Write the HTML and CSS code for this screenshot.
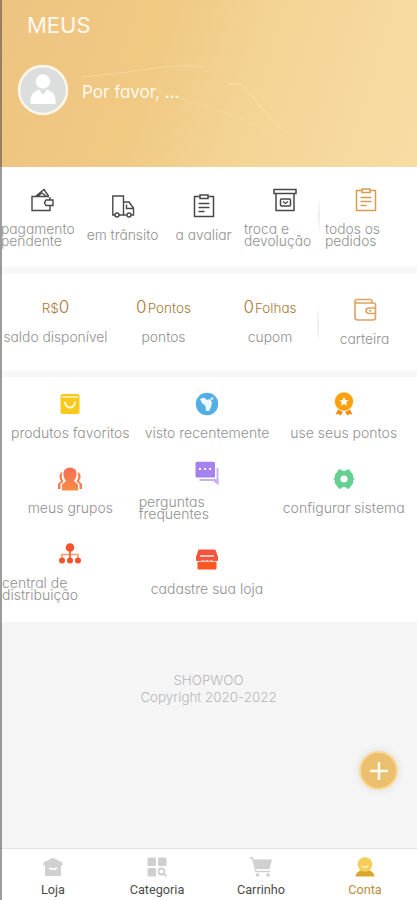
FILE: index.html
```html
<!DOCTYPE html>
<html lang="pt-BR">
<head>
<meta charset="utf-8">
<meta name="viewport" content="width=device-width, initial-scale=1">
<title>Meus</title>
<link rel="stylesheet" href="styles.css">
</head>
<body>
<div class="app">
  <header class="hero">
    <svg class="hero-lines" viewBox="0 0 417 167" fill="none" stroke="#ffe9bd"><path d="M82 77Q120 74 155 68Q180 64 205 67" opacity=".4"/><path d="M228 84H242L262 108L281 129" opacity=".6"/><path d="M150 88Q200 105 240 118L290 143" opacity=".2"/></svg>
    <h1 class="title">MEUS</h1>
    <div class="user">
      <div class="avatar">
        <svg viewBox="0 0 52 52" width="52" height="52"><circle cx="26" cy="26" r="24" fill="#dcdddd" stroke="#fff8ea" stroke-width="2.5"/><circle cx="26" cy="17.500" r="7.2" fill="#fff"/><path d="M13.500 40Q12 29 22 25.500L26 31L30 25.500Q40 29 38.500 40Z" fill="#fff"/></svg>
      </div>
      <span class="username">Por favor, ...</span>
    </div>
  </header>

  <section class="row orders">
    <div class="item"><svg class="icon" viewBox="0 0 24 24" fill="none" stroke="#484848" stroke-width="1.4"><path d="M19 8.500H2V22.500H20V18M20 12V9M6 8L14 1.500L18.500 8M8 8L12 5L16 8"/><path d="M23 12H16L14.500 14.800L16 17.500H23V12Z"/></svg><span class="label">pagamento pendente</span></div>
    <div class="item"><svg class="icon" viewBox="0 0 24 24" fill="none" stroke="#484848" stroke-width="1.4"><path d="M4 21H1.800V2H12.500V21H8M12.500 8H18L22.500 14V21H20M15.500 21H12.500M15.500 10.500V14.500H22"/><circle cx="6" cy="21" r="2"/><circle cx="18" cy="21" r="2"/></svg><span class="label">em trânsito</span></div>
    <div class="item"><svg class="icon" viewBox="0 0 24 24" fill="none" stroke="#484848" stroke-width="1.5"><path d="M8 2.500H2.500V22.500H21.500V2.500H16M6.500 9.500H17.500M6.500 13.500H17.500M6.500 17.500H12.500"/><path d="M8 1H16V4.500H8Z"/></svg><span class="label">a avaliar</span></div>
    <div class="item"><svg class="icon" viewBox="0 0 24 24" fill="none" stroke="#484848" stroke-width="1.5"><path d="M1 1.500H23V5.500H1ZM3 5.500V22.500H21V5.500"/><rect x="7.500" y="11" width="10" height="7" rx="1"/><path d="M10 13.500L12.500 15.500L15 13.500" stroke-width="1.200"/></svg><span class="label">troca e devolução</span></div>
    <div class="item divided"><svg class="icon" viewBox="0 0 24 24" fill="none" stroke="#dc9a4e" stroke-width="1.5"><path d="M8 2.500H2.500V22.500H21.500V2.500H16M6.500 9.500H17.500M6.500 13.500H17.500M6.500 17.500H12.500"/><path d="M8 1H16V4.500H8Z"/></svg><span class="label">todos os pedidos</span></div>
  </section>

  <section class="row wallet">
    <div class="item balance"><span class="value"><small>R$</small>0</span><span class="label">saldo disponível</span></div>
    <div class="item balance"><span class="value">0<small class="unit">Pontos</small></span><span class="label">pontos</span></div>
    <div class="item balance"><span class="value">0<small class="unit">Folhas</small></span><span class="label">cupom</span></div>
    <div class="item divided"><svg class="icon" viewBox="0 0 24 24" fill="none" stroke="#dfa263" stroke-width="1.600"><path d="M2 3V19.500Q2 22 4.500 22H20Q22.500 22 22.500 19.500V7Q22.500 5 20.500 5H4.500Q2 5 2 3.200Q2 1.500 4.500 1.500H17.500Q19 1.500 19 5M22.500 10H16.500Q13 10 13 12.500Q13 15.500 16.500 15.500H22.500M16 12.700H18.500"/></svg><span class="label">carteira</span></div>
  </section>

  <section class="menu">
    <div class="item"><svg class="icon" viewBox="0 0 24 24"><rect x="2.500" y="2" width="19" height="20" rx="2" fill="#f9c91e"/><path d="M4 5H20" stroke="#fff3b8" stroke-width="1.600"/><path d="M7 10.500Q8 15.500 12 15.500T17 10.500" fill="none" stroke="#fffbe0" stroke-width="1.800" stroke-linecap="round"/></svg><span class="label">produtos favoritos</span></div>
    <div class="item"><svg class="icon" viewBox="0 0 24 24"><circle cx="12" cy="12" r="11.200" fill="#54aee4"/><path d="M5 7L9 5.500L12 8L15 7L17 10L16 15L14 19L11 19L10.500 14L7 11Z" fill="#eef9ff"/><circle cx="17" cy="6.500" r="1.500" fill="#c6e8fb"/></svg><span class="label">visto recentemente</span></div>
    <div class="item"><svg class="icon" viewBox="0 0 24 24"><path d="M6 17.500L11 20L8.500 23.500L6.500 22L3.500 22.500ZM18 17.500L13 20L15.500 23.500L17.500 22L20.500 22.500Z" fill="#fb8b0b"/><circle cx="12" cy="9.500" r="9.200" fill="#fda00d"/><path d="M12 5L13.400 8L16.600 8.400L14.200 10.500L14.900 13.700L12 12.100L9.100 13.700L9.800 10.500L7.400 8.400L10.600 8Z" fill="#fff"/></svg><span class="label">use seus pontos</span></div>

    <div class="item"><svg class="icon" viewBox="0 0 24 24"><defs><linearGradient id="people" x2="0" y2="1"><stop stop-color="#f56f57"/><stop offset="1" stop-color="#fb8b45"/></linearGradient></defs><path d="M4.500 5Q1 6 1.500 11L3 14L0 17V22H2.500V17L5.500 14.500Q2.500 10 4.500 5ZM19.500 5Q23 6 22.500 11L21 14L24 17V22H21.500V17L18.500 14.500Q21.500 10 19.500 5Z" fill="#f87b55"/><path d="M12 .5C4 .5 4 9 8 14L4 17.500V23.500H20V17.500L16 14C20 9 20 .5 12 .5Z" fill="url(#people)"/></svg><span class="label">meus grupos</span></div>
    <div class="item"><svg class="icon" viewBox="0 0 24 24"><path d="M2 .8H18.500Q20 .8 20 2.300V16.500H2Q.5 16.500 .5 15V2.300Q.5 .8 2 .8Z" fill="#a583ef"/><path d="M22.500 7V19H4.500M19 19.500L22.800 22.500V18" stroke="#c6adf5" stroke-width="1.800" fill="none"/><path d="M4 8H6M9 8H11M14 8H16" stroke="#fff" stroke-width="2"/></svg><span class="label">perguntas frequentes</span></div>
    <div class="item"><svg class="icon" viewBox="0 0 24 24"><path d="M7.500 3Q9.800 5 12 5Q14.200 5 16.500 3L20.500 8.500Q19.300 10.500 21.500 12Q19.300 13.500 20.500 15.500L16.500 21Q14.200 19 12 19Q9.800 19 7.500 21L3.500 15.500Q4.700 13.500 2.500 12Q4.700 10.500 3.500 8.500Z" fill="#65d092" stroke="#65d092" stroke-width="1.800" stroke-linejoin="round"/><circle cx="12" cy="12" r="3.600" fill="#fff"/></svg><span class="label">configurar sistema</span></div>

    <div class="item"><svg class="icon" viewBox="0 0 24 24"><path d="M12 7V18M4 18V12.500H20V18" fill="none" stroke="#ff9b72" stroke-width="1.500"/><path d="M12 8V18" stroke="#f65b2c" stroke-width="1.500"/><g fill="#f6532a"><circle cx="12" cy="5.500" r="4.300"/><circle cx="4" cy="18.500" r="3"/><circle cx="12" cy="18.500" r="3"/><circle cx="20" cy="18.500" r="3"/></g></svg><span class="label">central de distribuição</span></div>
    <div class="item"><svg class="icon" viewBox="0 0 24 24"><path d="M4 2H20L22.500 9V12.500H1.500V9Z" fill="#f3533c" stroke="#f3533c" stroke-linejoin="round"/><path d="M5 8H19" stroke="#ffd4c8" stroke-width="1.800"/><path d="M2.500 14H21.500V20Q21.500 21.500 20 21.500H4Q2.500 21.500 2.500 20Z" fill="#fb5522"/><path d="M3 13Q6 14.500 7.500 12.500Q9.500 14.500 12 12.500Q14.500 14.500 16.500 12.500Q18 14.500 21 13" fill="none" stroke="#ffc2ad" stroke-width="1.300"/></svg><span class="label">cadastre sua loja</span></div>
  </section>

  <footer class="copy">SHOPWOO<br>Copyright 2020-2022</footer>

  <button class="fab" aria-label="Adicionar"><svg viewBox="0 0 20 20" width="20" height="20"><path d="M10 1V19M1 10H19" stroke="#fffaf0" stroke-width="2.600"/></svg></button>

  <nav class="tabs">
    <div class="tab"><svg class="tab-icon" viewBox="0 0 20 20"><path d="M10 .8L19.500 5.500V8.500H18V19H2V8.500H.5V5.500Z" fill="#d0d0d0"/><path d="M6 11Q10 13.500 14 11" stroke="#fff" stroke-width="1.600" fill="none"/></svg>Loja</div>
    <div class="tab"><svg class="tab-icon" viewBox="0 0 20 20"><g fill="#cfcfcf"><rect x=".5" y=".5" width="8.500" height="8.500" rx="1.500"/><rect x="11" y=".5" width="8.500" height="8.500" rx="1.500"/><rect x=".5" y="11" width="8.500" height="8.500" rx="1.500"/></g><circle cx="14.500" cy="14.500" r="3" fill="none" stroke="#cfcfcf" stroke-width="1.800"/><path d="M17 17L19.500 19.500" stroke="#cfcfcf" stroke-width="1.800"/></svg>Categoria</div>
    <div class="tab"><svg class="tab-icon cart" viewBox="0 0 24 20"><path d="M.5 1H3.500L7 14.500H21" fill="none" stroke="#cfcfcf" stroke-width="1.400"/><path d="M4.500 2.500H23L20.500 12H7Z" fill="#cfcfcf"/><circle cx="8.500" cy="18" r="1.800" fill="#cfcfcf"/><circle cx="19" cy="18" r="1.800" fill="#cfcfcf"/></svg>Carrinho</div>
    <div class="tab active"><svg class="tab-icon" viewBox="0 0 20 20"><path d="M.5 19.500Q1 14.500 7 13H13Q19 14.500 19.500 19.500Z" fill="#dba529"/><circle cx="10" cy="7.500" r="7.300" fill="#f6cd57"/><path d="M6.500 8.500Q10 12.500 13.500 8.500" stroke="#fff0b8" stroke-width="1.300" fill="none"/></svg>Conta</div>
  </nav>
</div>
</body>
</html>
```
FILE: styles.css
```css
* { box-sizing: border-box; }
body { margin: 0; }
.app {
  position: relative;
  display: flex;
  flex-direction: column;
  width: 417px;
  height: 900px;
  overflow: hidden;
  background: #f5f5f5;
  font-family: Inter, "Noto Sans", sans-serif;
  font-feature-settings: "cv11";
  font-weight: 300;
}
.app::before {
  content: "";
  position: absolute;
  z-index: 3;
  left: 0;
  top: 0;
  bottom: 0;
  width: 2px;
  background: rgba(70, 66, 66, .52);
}
.hero {
  position: relative;
  flex: none;
  height: 167px;
  padding: 11px 0 0 17px;
  background: linear-gradient(108deg, #eec381 0%, #f0c983 35%, #f4d596 62%, #f7dca4 100%);
  color: #fffaf0;
}
.hero-lines { position: absolute; inset: 0; }
.title {
  margin: 0 0 0 10px;
  font-size: 22px;
  line-height: 28px;
  font-weight: 400;
}
.user { display: flex; align-items: center; gap: 14px; margin-top: 25px; }
.avatar { width: 51px; height: 52px; }
.avatar svg { display: block; }
.username { position: relative; font-size: 17px; line-height: 24px; font-weight: 400; padding-top: 4px; }

.row, .menu { flex: none; background: #fff; display: grid; align-items: center; }
.row { padding-left: 1px; border-bottom: 8px solid #f8f8f8; }
.orders { height: 107px; grid-template-columns: repeat(5, 81px); padding-top: 2px; }
.wallet { height: 103px; grid-template-columns: 111px 105px 108px 81px; padding-left: 0; border-bottom-width: 7px; }
.menu {
  height: 245px;
  padding: 15px 0 0 2px;
  grid-template-columns: repeat(3, 136.700px);
  row-gap: 21px;
  align-content: start;
}
.item { display: flex; flex-direction: column; align-items: center; }
.icon { width: 24px; height: 24px; margin-bottom: 11px; }
.label { color: #909090; font-size: 14px; line-height: 12.500px; }
.row .label { font-size: 13.800px; }
.balance { padding-bottom: 4px; }
.divided { position: relative; }
.divided::before {
  content: "";
  position: absolute;
  left: -7px;
  top: 8px;
  width: 2px;
  height: 38px;
  background: linear-gradient(#fff, #ececec, #fff);
}
.value { color: #a87937; font-size: 17px; line-height: 20px; margin-bottom: 13px; }
.value small { font-size: 13.500px; }
.value .unit { margin-left: 1px; }

.copy {
  margin-top: 50px;
  text-align: center;
  font-size: 13.400px;
  line-height: 17px;
  color: #b7b7b7;
}
.fab {
  position: absolute;
  left: 359px;
  top: 751px;
  width: 39px;
  height: 39px;
  display: grid;
  place-items: center;
  padding: 0;
  border: 2px solid #fbd894;
  border-radius: 50%;
  background: #eabf6e;
  box-shadow: 0 0 10px rgba(0, 0, 0, .09);
}
.tabs {
  margin-top: auto;
  height: 52px;
  padding: 8px 0 0 1px;
  display: grid;
  grid-template-columns: repeat(4, 104px);
  background: #fff;
  border-top: 1px solid #e3e3e3;
  font: 12.700px/16px Roboto, "Liberation Sans", sans-serif;
  color: #4b4b4b;
}
.tab { display: flex; flex-direction: column; align-items: center; gap: 5px; }
.tab-icon { width: 20px; height: 20px; }
.tab-icon.cart { width: 24px; }
.active { color: #ba8d3a; }
```
